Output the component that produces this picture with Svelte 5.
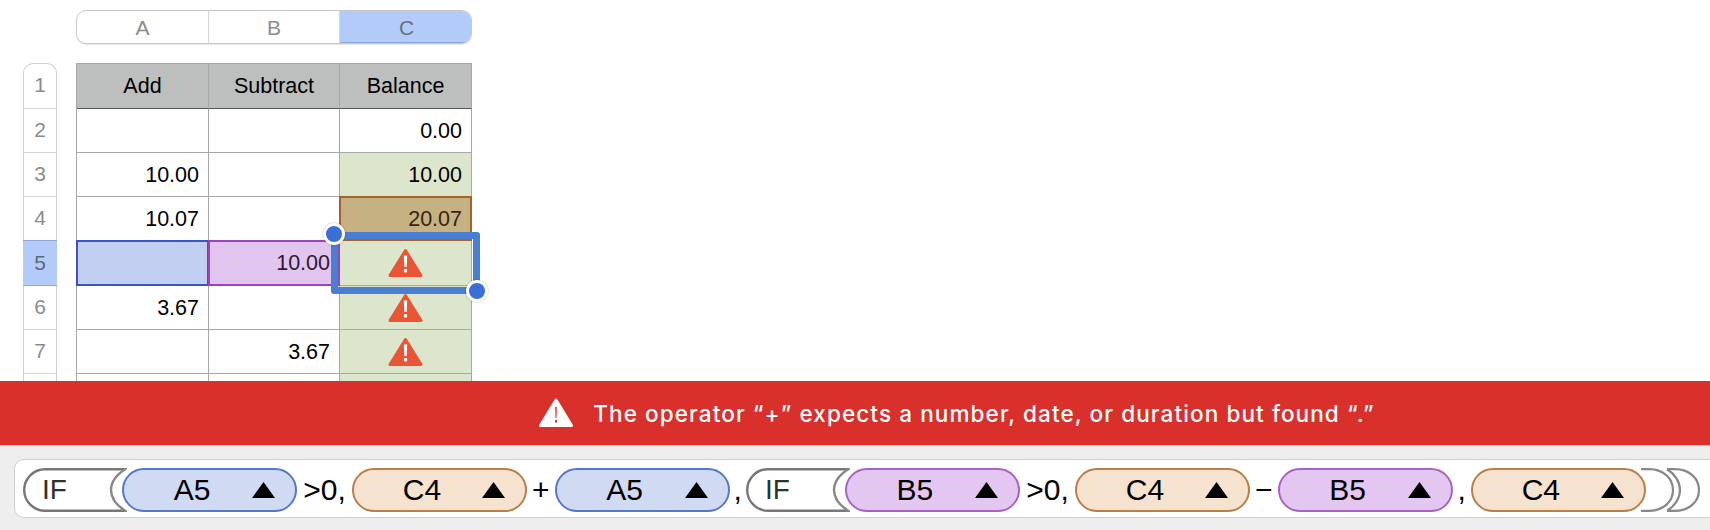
<script>
  const columns = ['A', 'B', 'C'];
  const rowNumbers = ['1', '2', '3', '4', '5', '6', '7', ''];

  // kind: plain | green | error | a5 | b5 | c4
  const rows = [
    [{ v: '' }, { v: '' }, { v: '0.00' }],
    [{ v: '10.00' }, { v: '' }, { v: '10.00', kind: 'green' }],
    [{ v: '10.07' }, { v: '' }, { v: '20.07', kind: 'c4' }],
    [{ v: '', kind: 'a5' }, { v: '10.00', kind: 'b5' }, { kind: 'error' }],
    [{ v: '3.67' }, { v: '' }, { kind: 'error' }],
    [{ v: '' }, { v: '3.67' }, { kind: 'error' }],
    [{ v: '' }, { v: '' }, { v: '', kind: 'green' }]
  ];

  const formula = [
    { t: 'fn' },
    { t: 'ref', v: 'A5', c: 'a5' },
    { t: 'op', v: '>0,' },
    { t: 'ref', v: 'C4', c: 'c4' },
    { t: 'op', v: '+', cls: 'wide' },
    { t: 'ref', v: 'A5', c: 'a5' },
    { t: 'op', v: ',', cls: 'comma tight' },
    { t: 'fn' },
    { t: 'ref', v: 'B5', c: 'b5' },
    { t: 'op', v: '>0,' },
    { t: 'ref', v: 'C4', c: 'c4' },
    { t: 'op', v: '−', cls: 'wide' },
    { t: 'ref', v: 'B5', c: 'b5' },
    { t: 'op', v: ',', cls: 'comma' },
    { t: 'ref', v: 'C4', c: 'c4' }
  ];
</script>

<div class="page">
  <section class="sheet">
    <div class="col-head">
      {#each columns as c, i}
        <div class="col" class:on={i === 2}>{c}</div>
      {/each}
    </div>

    <div class="body">
      <div class="gutter">
        {#each rowNumbers as n}
          <div class="rownum" class:on={n === '5'}>{n}</div>
        {/each}
      </div>

      <div class="table">
        <div class="grid">
          <div class="cell head">Add</div>
          <div class="cell head">Subtract</div>
          <div class="cell head">Balance</div>
          {#each rows as row}
            {#each row as cell}
              <div class="cell {cell.kind || ''}">
                {#if cell.kind === 'error'}
                  <svg class="warn" viewBox="0 0 35 30" width="35" height="30">
                    <path d="M17.5 2.5 L33 27.5 H2 Z" fill="#ea5535" stroke="#ea5535" stroke-width="3" stroke-linejoin="round" />
                    <path d="M15.8 7.5 H19.2 L18.7 19 H16.3 Z" fill="#fff" />
                    <rect x="15.9" y="21" width="3.2" height="3.4" rx="1" fill="#fff" />
                  </svg>
                {:else}
                  {cell.v}
                {/if}
              </div>
            {/each}
          {/each}
        </div>

        <div class="selection"></div>
        <div class="handle tl"></div>
        <div class="handle br"></div>
      </div>
    </div>
  </section>

  <div class="banner">
    <svg viewBox="0 0 34 30" width="34" height="30">
      <path d="M17 2 L32.5 27.5 H1.5 Z" fill="#fff" stroke="#fff" stroke-width="3" stroke-linejoin="round" />
      <path d="M16.2 9 H17.8 L17.5 20 H16.5 Z" fill="#da302b" />
      <rect x="16" y="22" width="2" height="2.6" fill="#da302b" />
    </svg>
    <span>The operator “+” expects a number, date, or duration but found “.”</span>
  </div>

  <div class="footer">
    <div class="bar">
      {#each formula as tok}
        {#if tok.t === 'fn'}
          <span class="fn">
            <svg viewBox="0 0 104 44" width="104" height="44">
              <path d="M104 1.2 H22 A20.8 20.8 0 0 0 22 42.8 H104" fill="#fff" stroke="#777" stroke-width="2.4" />
              <path d="M104 0 C94 6 88 13 88 22 C88 31 94 38 104 44" fill="#fff" stroke="#888" stroke-width="2.4" />
            </svg>
            <span class="fn-name">IF</span>
          </span>
        {:else if tok.t === 'ref'}
          <span class="chip {tok.c}">
            <span class="label">{tok.v}</span>
            <svg class="arrow" viewBox="0 0 23 16" width="23" height="16"><path d="M11.5 0 L23 16 H0 Z" fill="#000" /></svg>
          </span>
        {:else}
          <span class="op {tok.cls || ''}">{tok.v}</span>
        {/if}
      {/each}
      <svg class="closers" viewBox="0 0 60 44" width="60" height="44">
        <g fill="none" stroke="#888" stroke-width="2.2">
          <path d="M0 1.2 H8 C22 1.2 32 10 32 22 C32 34 22 42.8 8 42.8 H0" />
          <path d="M26 1.2 H34 C48 1.2 58 10 58 22 C58 34 48 42.8 34 42.8 H26" />
          <path d="M26 1.2 C34 6 39 14 39 22 C39 30 34 38 26 42.8" />
        </g>
      </svg>
    </div>
  </div>
</div>

<style>
  :global(body) {
    margin: 0;
    background: #fff;
  }

  .page {
    width: 1710px;
    height: 530px;
    display: flex;
    flex-direction: column;
    overflow: hidden;
    font-family: "Liberation Sans", Arial, sans-serif;
  }

  .sheet {
    height: 381px;
    flex: none;
    overflow: hidden;
    padding-top: 10px;
    box-sizing: border-box;
  }

  .col-head {
    display: grid;
    grid-template-columns: 132px 131px 133px;
    width: 396px;
    height: 34px;
    margin-left: 76px;
    box-sizing: border-box;
    border: 1px solid #c8c8c8;
    border-radius: 10px;
    overflow: hidden;
    box-shadow: 0 1px 1px rgba(0, 0, 0, 0.1);
  }

  .col {
    display: flex;
    align-items: center;
    justify-content: center;
    padding-top: 1px;
    font-size: 21px;
    color: #8c8c8c;
    border-right: 1px solid #d6d6d6;
  }

  .col:last-child {
    border-right: none;
  }

  .col.on {
    background: #b3cbf9;
    color: #66707f;
    box-shadow: inset -1px -1px 0 #8ba7d8;
  }

  .body {
    display: flex;
    margin-top: 19px;
  }

  .gutter,
  .grid {
    display: grid;
    grid-template-rows: 45px 44px 44px 44px 45px 44px 44px 44px;
  }

  .gutter {
    width: 34px;
    margin-left: 23px;
    box-sizing: border-box;
    border: 1px solid #cfcfcf;
    border-bottom: none;
    border-radius: 10px 10px 0 0;
    margin-right: 19px;
  }

  .rownum {
    display: flex;
    align-items: center;
    justify-content: center;
    font-size: 21px;
    color: #8c8c8c;
    border-bottom: 1px solid #d6d6d6;
    margin-top: -1px;
    padding-bottom: 1px;
  }

  .rownum.on {
    background: #b3cbf9;
    color: #5f6874;
    margin: -1px -1px 0;
    border-top: 1px solid #8ba7d8;
    border-bottom: 1px solid #8ba7d8;
  }

  .table {
    position: relative;
    width: 396px;
  }

  .grid {
    grid-template-columns: 132px 131px 132px;
    border-left: 1px solid #a8a8a8;
    border-top: 1px solid #a8a8a8;
  }

  .cell {
    display: flex;
    align-items: center;
    justify-content: flex-end;
    padding: 1px 9px 0 0;
    box-sizing: border-box;
    font-size: 21.5px;
    color: #000;
    border-right: 1px solid #a8a8a8;
    border-bottom: 1px solid #a8a8a8;
  }

  .cell.head {
    justify-content: center;
    padding: 1px 0 0;
    background: #bdbfbe;
    border-bottom-color: #555;
  }

  .cell.green,
  .cell.error {
    background: #dbe6cd;
  }

  .cell.error {
    justify-content: center;
    padding: 0;
  }

  .cell.c4 {
    background: #c6b183;
    color: #33250f;
    border: 2px solid #a5622b;
    margin: -1px 0 0 -1px;
    padding: 1px 8px 0 0;
  }

  .cell.a5 {
    background: #c3cff0;
    border: 2px solid #3a55c8;
    margin: -1px 0 0 -1px;
  }

  .cell.b5 {
    background: #e2c5ef;
    color: #2a1838;
    border: 2px solid #9f42c0;
    margin: -1px 0 0 -1px;
    padding: 1px 8px 0 0;
  }

  .selection {
    position: absolute;
    left: 255px;
    top: 169px;
    width: 149px;
    height: 62px;
    box-sizing: border-box;
    border: 7px solid #4a7ed0;
    border-radius: 3px;
  }

  .handle {
    position: absolute;
    width: 16px;
    height: 16px;
    border-radius: 50%;
    background: #3a6fd8;
    border: 3px solid #fff;
    box-shadow: 0 0 2px rgba(0, 0, 0, 0.3);
  }

  .handle.tl {
    left: 247px;
    top: 160px;
  }

  .handle.br {
    left: 390px;
    top: 217px;
  }

  .banner {
    height: 65px;
    flex: none;
    box-sizing: border-box;
    padding-left: 204px;
    display: flex;
    align-items: center;
    justify-content: center;
    gap: 20px;
    background: #da302b;
    border-bottom: 1px solid #e6c4c2;
    color: #fff;
    font-family: Inter, "Liberation Sans", sans-serif;
    font-size: 22.5px;
    font-weight: 500;
    letter-spacing: 1.1px;
  }

  .footer {
    flex: 1;
    background: #eeeeee;
    padding: 13px 0 0 14px;
  }

  .bar {
    width: 1720px;
    height: 59px;
    box-sizing: border-box;
    display: flex;
    align-items: center;
    padding: 3px 0 0 8px;
    background: #fff;
    border: 1px solid #d0d0d0;
    border-radius: 10px 0 0 10px;
    font-size: 30px;
    color: #000;
  }

  .fn {
    position: relative;
    width: 104px;
    height: 44px;
    margin-right: -5px;
    flex: none;
    display: block;
  }

  .fn svg {
    display: block;
  }

  .fn-name {
    position: absolute;
    left: 19px;
    top: 0;
    font-size: 28px;
    line-height: 44px;
    color: #2c332c;
  }

  .chip {
    position: relative;
    width: 175px;
    height: 44px;
    flex: none;
    box-sizing: border-box;
    display: flex;
    align-items: center;
    padding: 0 20px 0 8px;
    border: 2px solid;
    border-radius: 22px;
    box-shadow: 0 0 0 1px #fff;
  }

  .label {
    flex: 1;
    text-align: center;
  }

  .arrow {
    flex: none;
  }

  .chip.a5 {
    background: #d0dbf3;
    border-color: #5578c8;
  }

  .chip.b5 {
    background: #e4c7f0;
    border-color: #a862c6;
  }

  .chip.c4 {
    background: #f5e2cf;
    border-color: #b87f48;
  }

  .op {
    flex: none;
    padding: 0 6.25px;
  }

  .op.wide {
    padding: 0 5px;
  }

  .op.comma {
    padding: 0 5px;
  }

  .op.comma.tight {
    padding: 0 4px;
  }

  .closers {
    flex: none;
    margin-left: -5px;
  }
</style>
